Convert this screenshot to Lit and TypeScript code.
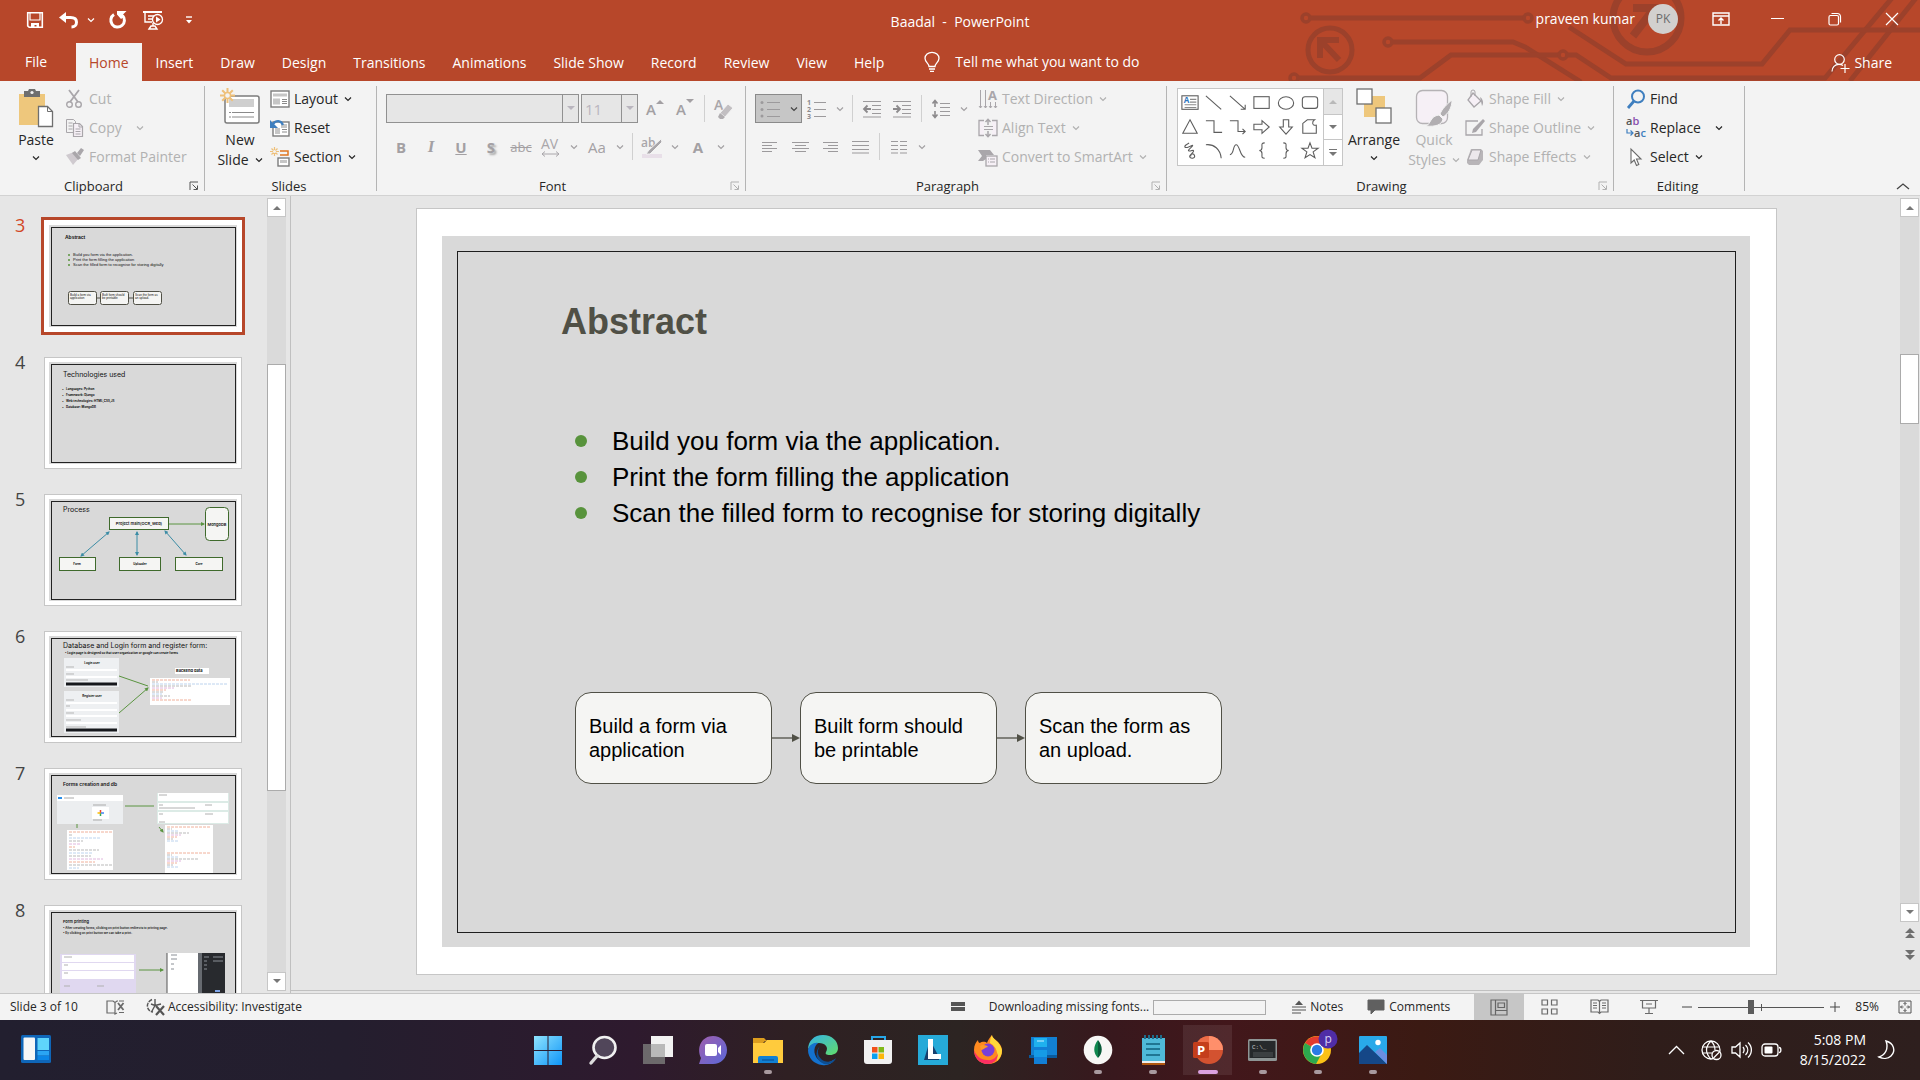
import { LitElement, html, svg, css, nothing, TemplateResult } from "lit";
import { customElement, state } from "lit/decorators.js";

/** Wraps SVG content in a box of w by h units, drawn one unit to a pixel. */
const icon = (w: number, h: number, body: unknown) =>
  html`<svg class="ico" width=${w} height=${h} viewBox="0 0 ${w} ${h}" fill="none" aria-hidden="true">${body}</svg>`;

const chevron = icon(8, 8, svg`<path d="M1 2.5l3 3 3-3" stroke="currentColor" stroke-width="1.2"/>`);
const G = "#a9a6aa";
const D = "#6a6a6a";

/* Title bar */
const iSave = icon(18, 18, svg`<path d="M1.7 1.7h14.6v14.6H3.2l-1.5-1.5z" stroke="#fff" stroke-width="1.6"/><path d="M4 1v8h10V1" stroke="#fff" stroke-width="1.2"/><path d="M5 17v-5h8v5h-2.500v-3H8.500v3z" fill="#fff"/>`);
const iUndo = icon(20, 18, svg`<path d="M4 6.500h7.500c4 0 6 2 6 4.700s-2 4.800-5 4.800" stroke="#fff" stroke-width="3"/><path d="M0 6.500L7 1v11z" fill="#fff"/>`);
const iRedo = icon(18, 18, svg`<path d="M5 3.500A6.800 6.800 0 1 0 13.500 4.500" stroke="#fff" stroke-width="3"/><path d="M8 0h9.500l-3.500 3.500v3l-2 1.500-4-4.500z" fill="#fff"/>`);
const iShow = icon(22, 20, svg`<path d="M1 2h19" stroke="#fff" stroke-width="2"/><path d="M3 3v9h7M6 6h6M6 9h4M11 13v3M7 19l2-3h4l2 3z" stroke="#fff" stroke-width="1.400"/><circle cx="15.500" cy="9.500" r="5" stroke="#fff" stroke-width="1.300" fill="#b7472a"/><path d="M14 6.500v6l4.500-3z" fill="#fff"/>`);
const iMore = icon(8, 10, svg`<path d="M1 2h6" stroke="#fff" stroke-width="1.400"/><path d="M1 5h6L4 8.500z" fill="#fff"/>`);
const iRibbonOpt = icon(18, 14, svg`<path d="M1 1h16v12H1zM1 4h16M9 12V6M6.500 8.500L9 6l2.500 2.500" stroke="#fff" stroke-width="1.400"/>`);
const iMin = icon(14, 14, svg`<path d="M0 6.500h13" stroke="#fff"/>`);
const iRestore = icon(14, 14, svg`<rect x="1" y="3.500" width="9.500" height="9.500" rx="1.500" stroke="#fff" stroke-width="1.200"/><path d="M3.500 1.500h6a3 3 0 0 1 3 3v6" stroke="#fff" stroke-width="1.200"/>`);
const iClose = icon(14, 14, svg`<path d="M1 1l12 12M13 1L1 13" stroke="#fff" stroke-width="1.200"/>`);
const iBulb = icon(16, 20, svg`<path d="M5 14.500c0-3-4-4.500-4-8.200A7 6 0 0 1 15 6.300c0 3.700-4 5.200-4 8.200zM5 17h6M6 19.300h4" stroke="#fff" stroke-width="1.300"/>`);
const iShare = icon(19, 19, svg`<circle cx="8.500" cy="5.500" r="4.800" stroke="#fff" stroke-width="1.200"/><path d="M1 17.500c0-4 2.800-7.200 7-7.200 1.600 0 3 .4 4 1.200M14 10v9M9.500 14.500h9" stroke="#fff" stroke-width="1.200"/>`);
const circuit = html`<svg class="circuit" width="640" height="81" viewBox="0 0 640 81" fill="none" stroke="#9c412b" stroke-width="5" aria-hidden="true">
  ${svg`<circle cx="26" cy="18" r="4" stroke-width="3.500"/><path d="M31 18h212"/><circle cx="248" cy="18" r="4" stroke-width="3.500"/>
  <circle cx="50" cy="50" r="22"/><path d="M40 58V40h19M42 42l17 18" stroke-width="6"/>
  <circle cx="108" cy="42" r="4" stroke-width="3.500"/><path d="M113 42h120l12 5 56 35"/>
  <circle cx="14" cy="78" r="4" stroke-width="3.500"/><path d="M19 78h121l31-23h107"/><circle cx="283" cy="55" r="4" stroke-width="3.500"/>
  <path d="M288 55h8l35 23h214L612-2M570 81L636-2"/><path d="M289 27l57 37h136l28-34h130"/>
  <circle cx="367" cy="18" r="34" stroke-width="7"/><path d="M353 8h22v20M373 10l-20 26" stroke-width="8"/>`}</svg>`;

/* Clipboard */
const iPaste = icon(36, 40, svg`<path d="M1 6h26v31H1z" fill="#eec77c"/><path d="M6 3h4l1-2h6l1 2h4v6H6z" fill="#6f6f6f"/><circle cx="14" cy="4.500" r="1.600" fill="#f3f3f3"/><path d="M20.500 18.500h9l5 5v15h-14z" fill="#fff" stroke="#6f6f6f" stroke-width="1.300"/><path d="M29.500 18.500v5h5" stroke="#6f6f6f"/>`);
const iCut = icon(20, 20, svg`<path d="M4 1l9 12M14 1L5 13" stroke=${G} stroke-width="1.800"/><circle cx="4.500" cy="15.500" r="2.800" stroke=${G} stroke-width="1.400"/><circle cx="13.500" cy="15.500" r="2.800" stroke=${G} stroke-width="1.400"/>`);
const iCopy = icon(20, 20, svg`<path d="M1.500 1.500h7l2 2v11h-9zM3.500 5h4M3.500 8h4M3.500 11h4" stroke=${G}/><path d="M8.500 5.500h6l3 3v10h-9z" fill="#f6f0f6" stroke=${G} stroke-width="1.200"/><path d="M14 5.500v3.500h3.500M10.500 11h5M10.500 13.500h5M10.500 16h5" stroke=${G}/>`);
const iPainter = icon(20, 20, svg`<path d="M1 8l8-3 5 6-6 7z" fill="#cfcacf"/><path d="M7 6l3-2 6 7-3 2zM12 6l4-5 3 2-4 6z" fill=${G}/>`);
const iLaunch = icon(10, 10, svg`<path d="M1 9V1h8M3.500 3.500L8 8M8.500 4.500v4h-4" stroke="currentColor"/>`);

/* Slides */
const star = svg`<path d="M7.500 0v15M0 7.500h15M2.200 2.200l10.600 10.600M12.800 2.200L2.200 12.800" stroke="#eec07a" stroke-width="2"/><circle cx="7.500" cy="7.500" r="3" fill="#f3f3f3" stroke="#eec07a" stroke-width="1.400"/>`;
const iNew = icon(40, 38, svg`<rect x="5" y="8" width="34" height="27" rx="2" fill="#fff" stroke="#7c7c7c" stroke-width="1.500"/><path d="M9 11h25v8H9z" fill="#cfcfcf"/><path d="M9 24.500h2M12 24.500h22M9 29h2M12 29h22" stroke="#8a8a8a"/><g>${star}</g>`);
const iLayout = icon(20, 18, svg`<rect x="1" y="1" width="18" height="16" fill="#fff" stroke="#7c7c7c" stroke-width="1.400"/><path d="M3 3.500h14v3H3zM3 8.500h7v6H3z" fill="#c6c6c6"/><path d="M12 9.500h5M12 11.500h5M12 13.500h5" stroke="#8a8a8a"/>`);
const iReset = icon(20, 20, svg`<rect x="3" y="4" width="16" height="14" fill="#fff" stroke="#7c7c7c" stroke-width="1.400"/><path d="M11 6h6v4h-6zM5 10h5v6H5z" fill="#c6c6c6"/><path d="M12 11.500h5M12 14h5" stroke="#8a8a8a"/><path d="M3 6c3-4 8-4 10 1" stroke="#3f7fbf" stroke-width="2.200"/><path d="M0 2v8h8z" fill="#3f7fbf"/>`);
const iSection = icon(20, 20, svg`<path d="M10 4h8v4h-8" stroke="#e0751f" stroke-width="1.500"/><rect x="8" y="11" width="11" height="8" fill="#fff" stroke="#7c7c7c" stroke-width="1.400"/><path d="M10 13h7v3h-7z" fill="#c6c6c6"/><path d="M4.500 0v9M0 4.500h9M1.500 1.500l6 6M7.500 1.500l-6 6" stroke="#eec07a" stroke-width="1.200"/><circle cx="4.500" cy="4.500" r="1.500" fill="#f3f3f3"/>`);

/* Paragraph */
const rows = (list: number[][]) => svg`<path d=${list.map(([x, y, w]) => `M${x} ${y}h${w}`).join("")} stroke="#9c9a9c" stroke-width="1.200"/>`;
const iBullets = icon(22, 18, svg`${rows([[7, 2.5, 13], [7, 9.5, 13], [7, 16.5, 13]])}<circle cx="2" cy="2.500" r="1.500" fill="#9c9a9c"/><circle cx="2" cy="9.500" r="1.500" fill="#9c9a9c"/><circle cx="2" cy="16" r="1.500" fill="#9c9a9c"/>`);
const iNumbers = icon(20, 20, svg`${rows([[7, 3.5, 12], [7, 10.5, 12], [7, 17.5, 12]])}<g fill="#8c8a8c" font-size="7" font-weight="700" font-family="Open Sans, sans-serif"><text x="0" y="6">1</text><text x="0" y="13">2</text><text x="0" y="20">3</text></g>`);
const iDedent = icon(18, 18, svg`${rows([[0, 1.5, 18], [9, 5.5, 9], [9, 9.5, 9], [9, 13.5, 9], [0, 17, 18]])}<path d="M8 9H1.500M4.500 5.500L1 9l3.500 3.500" stroke="#8c8a8c" stroke-width="1.800"/>`);
const iIndent = icon(18, 18, svg`${rows([[0, 1.5, 18], [9, 5.5, 9], [9, 9.5, 9], [9, 13.5, 9], [0, 17, 18]])}<path d="M0 9h6.500M3.500 5.500L7 9l-3.500 3.500" stroke="#8c8a8c" stroke-width="1.800"/>`);
const iSpacing = icon(18, 20, svg`${rows([[8, 4.5, 10], [8, 8.5, 10], [8, 12.5, 10], [8, 16.5, 10]])}<path d="M3 2v6M3 12v6M.5 4.500L3 1.500l2.500 3M.5 15.500L3 18.500l2.500-3" stroke="#8c8a8c" stroke-width="1.600"/>`);
const iLeft = icon(17, 12, rows([[0, 1.5, 15], [0, 4.5, 10], [0, 7.5, 15], [0, 10.5, 10]]));
const iCenter = icon(17, 12, rows([[0, 1.5, 17], [3, 4.5, 11], [0, 7.5, 17], [3, 10.5, 11]]));
const iRight = icon(17, 12, rows([[1, 1.5, 15], [6, 4.5, 10], [1, 7.5, 15], [6, 10.5, 10]]));
const iJustify = icon(17, 14, rows([[0, 1.5, 17], [0, 5.5, 17], [0, 9.5, 17], [0, 13, 17]]));
const iColumns = icon(17, 14, rows([[0, 1.5, 7], [0, 5.5, 7], [0, 9.5, 7], [0, 13, 7], [9, 1.5, 7], [9, 5.5, 7], [9, 9.5, 7], [9, 13, 7]]));
const iTextDir = icon(20, 20, svg`<path d="M2.500 1v18M7.500 1v18M12.500 13v6M17.500 13v6M1 17l1.500 2L4 17M6 17l1.500 2L9 17M11 17l1.500 2 1.500-2M16 17l1.500 2 1.500-2" stroke=${G}/><text x="10" y="11" font-size="13" font-weight="700" font-family="Open Sans, sans-serif" fill=${G}>A</text>`);
const iAlignText = icon(20, 20, svg`<path d="M6 2.500H1v15h5M14 2.500h5v15h-5" stroke=${G} stroke-width="1.300" fill="#f6f0f6"/><path d="M6 8.500h9M6 11.500h9" stroke=${G}/><path d="M10 1v6M10 13v6M7.500 4L10 1.300 12.500 4M7.500 16l2.500 2.700 2.500-2.700" stroke=${G} stroke-width="1.500"/>`);
const iSmart = icon(20, 20, svg`<path d="M0 3h12l4 5h-8v4l-3 2H0l4-5z" fill=${G}/><rect x="8" y="9" width="11" height="10" fill="#f6f0f6" stroke=${G} stroke-width="1.300"/><path d="M10 12h1M12 12h5M10 15h1M12 15h5" stroke=${G}/>`);

/* Drawing */
const shapeBodies: TemplateResult[] = [
  svg`<rect x="1" y="2" width="18" height="15" fill="#fff"/><path d="M10 6h7M10 9h7M4 12h13M4 15h13" stroke="#8a8a8a"/><text x="3" y="10.500" font-size="9" font-weight="700" stroke="none" fill="#2f77c0" font-family="Open Sans, sans-serif">A</text>`,
  svg`<path d="M1 2l17 15"/>`,
  svg`<path d="M1 2l17 15M18 12v5h-5"/>`,
  svg`<rect x="1" y="3" width="17" height="13"/>`,
  svg`<ellipse cx="10" cy="10" rx="8.500" ry="7"/>`,
  svg`<rect x="1.500" y="3" width="17" height="13" rx="3"/>`,
  svg`<path d="M10 2l8 15H2z"/>`,
  svg`<path d="M1 3h9v13h9"/>`,
  svg`<path d="M1 3h9v12h8M15 12l3 3-3 3"/>`,
  svg`<path d="M1 7h9V3l8 7-8 7v-4H1z"/>`,
  svg`<path d="M7 2v8H3l7 8 7-8h-4V2z"/>`,
  svg`<path d="M2 17V6l5-4h8c-3 2-3 7 2 6v9z"/>`,
  svg`<path d="M9 1c-6 3-6 6-2 5s6-3 6-2-7 6-4 6 5-2 5 0-6 5-4 7 6 1 5-2-5-2-4 1" />`,
  svg`<path d="M1 3c9-1 16 5 17 15"/>`,
  svg`<path d="M1 14C6 14 4 3 8 3s4 14 10 14"/>`,
  svg`<path d="M13 1c-4 0-3 2-3 5s-1 3.500-3 3.500c2 0 3 .5 3 3.500s-1 5 3 5"/>`,
  svg`<path d="M7 1c4 0 3 2 3 5s1 3.500 3 3.500c-2 0-3 .5-3 3.500s1 5-3 5"/>`,
  svg`<path d="M10 1l2.200 6H19l-5.500 4 2 6.500L10 14l-5.500 3.500 2-6.500L1 7h6.800z"/>`,
];
const shapeNames = ["Text Box", "Line", "Arrow", "Rectangle", "Oval", "Rounded Rectangle", "Triangle", "Elbow Connector", "Elbow Arrow", "Right Arrow", "Down Arrow", "Freeform", "Scribble", "Arc", "Curve", "Left Brace", "Right Brace", "Star"];
const iArrange = icon(36, 36, svg`<path d="M13 8h16v14H13z" fill="#eec77c"/><path d="M8 15h14v14H8z" fill="#eec77c"/><rect x="1" y="1" width="15" height="15" fill="#fff" stroke="#6f6f6f" stroke-width="1.300"/><rect x="20" y="20" width="15" height="15" fill="#fff" stroke="#6f6f6f" stroke-width="1.300"/>`);
const iQuick = icon(38, 40, svg`<rect x="1.500" y="2.500" width="31" height="33" rx="6" fill="#f6f0f6" stroke="#b5b2b5" stroke-width="1.300"/><path d="M37 12c-5 4-10 9-12 14l3 3c5-3 9-9 9-17zM24 27l4 4c-1 6-8 8-17 7 5-2 4-10 13-11z" fill="#b1aeb1" stroke="#f3f3f3"/>`);
const iFill = icon(20, 20, svg`<path d="M8 4l8 8-7 6-6-7z" stroke=${G} stroke-width="1.300" fill="#f6f0f6"/><path d="M6 8V3a2 2 0 0 1 4 0v4" stroke=${G}/><path d="M15 8c3 2 4 6 2 9z" fill=${G}/>`);
const iOutline = icon(20, 20, svg`<path d="M17 11v6H1V3h12" stroke=${G} stroke-width="1.300"/><path d="M18 1l2 2-9 11-4 1 1-4z" fill=${G}/>`);
const iEffects = icon(20, 20, svg`<path d="M6 2h10l2 2v9l-4 5H4l-2-2v-3z" fill="#b8b5b8"/><path d="M7 3h9l-3 10H3z" fill="#ece8ec" stroke=${G}/>`);

/* Editing */
const iFind = icon(20, 20, svg`<circle cx="12" cy="7.500" r="6" stroke="#3f7fbf" stroke-width="2"/><path d="M8 12l-6 7" stroke="#3f7fbf" stroke-width="2.800"/>`);
const iReplace = icon(20, 20, svg`<g font-size="11" font-weight="600" font-family="Open Sans, sans-serif"><text x="0" y="7"><tspan fill="#555">a</tspan><tspan fill="#8a4fae">b</tspan></text><text x="8" y="19"><tspan fill="#555">a</tspan><tspan fill="#3f7fbf">c</tspan></text></g><path d="M1 11v4h6M4.500 12.500L7 15l-2.500 2.500" stroke="#3f7fbf" stroke-width="1.200"/>`);
const iSelect = icon(20, 20, svg`<path d="M5 2v14l3.200-3 2.300 5.500 2.300-1-2.300-5.500h4.500z" stroke="#6a6a6a" fill="#fff" stroke-width="1.100"/>`);
const iEraser = icon(20, 22, svg`<text x="0" y="12" font-size="14" font-weight="600" font-family="Open Sans, sans-serif" fill="#a9a6aa">A</text><path d="M14 6l5 4-8 9-5-4z" fill="#c2bfc2" stroke="#f3f3f3"/><path d="M6 15l5 4-2 2H6l-2-2z" fill="#b0adb0"/>`);
const iHighlight = icon(22, 22, svg`<path d="M1 18h20v4H1z" fill="#e8dfe8"/><text x="0" y="11" font-size="12" font-weight="600" font-family="Open Sans, sans-serif" fill="#a9a6aa">ab</text><path d="M20 3l1 3-9 9-3 3H5l3-4z" fill="#a9a6aa" stroke="#f3f3f3"/>`);
const iSpread = icon(20, 20, svg`<text x="0" y="12" font-size="14" font-family="Open Sans, sans-serif" fill="#a9a6aa">AV</text><path d="M1 17h17M4 14.500L1 17l3 2.500M15 14.500l3 2.500-3 2.500" stroke=${G}/>`);
const tri = (up: boolean) => icon(8, 5, up ? svg`<path d="M0 5l4-4 4 4z" fill="currentColor"/>` : svg`<path d="M0 0l4 4 4-4z" fill="currentColor"/>`);
const iCollapse = icon(14, 8, svg`<path d="M1 7l6-5 6 5" stroke="#444" stroke-width="1.300"/>`);

/* Status bar */
const iSpell = icon(20, 16, svg`<path d="M9 14H1V2h6l2 1.500L11 2h1M9 3.500V15l2-1" stroke=${D} stroke-width="1.200"/><path d="M12 4l5.500 7M17.500 4L12 11" stroke=${D} stroke-width="1.800"/><path d="M13 2h5M13 13.500h5" stroke=${D}/>`);
const iAccess = icon(20, 18, svg`<path d="M6 1.500C2.500 3 1 6 1.500 9S4 13.500 7 14" stroke="#555" stroke-width="1.400" stroke-dasharray="4 1"/><path d="M9 1v6M5 6l4 1.500L15 6M9 7.500L6 13" stroke="#555" stroke-width="1.400"/><path d="M10 8l8 9M18 8l-8 9" stroke="#555" stroke-width="2.200"/>`);
const iBars = icon(14, 10, svg`<path d="M0 0h14v4H0zM0 5h14v4H0z" fill="#555"/>`);
const iNotes = icon(14, 16, svg`<path d="M3 6l4-4.500L11 6z" fill="#555"/><path d="M0 8h14M0 11h14M0 14h9" stroke="#555" stroke-width="1.200"/>`);
const iComment = icon(18, 16, svg`<path d="M1 1h16v10H8l-4 4v-4H1z" fill="#606060" stroke="#606060" stroke-linejoin="round"/>`);
const iNormal = icon(18, 17, svg`<path d="M1 1h16v15H1zM5.500 1v15M5.500 11.500H17M8 4h6.500v4.500H8z" stroke="#666" stroke-width="1.200"/>`);
const iSorter = icon(17, 16, svg`<path d="M1 1h5.500v5H1zM10.500 1H16v5h-5.500zM1 10h5.500v5H1zM10.500 10H16v5h-5.500z" stroke=${D} stroke-width="1.200"/>`);
const iReading = icon(19, 16, svg`<path d="M9.500 2.500L8 1H1v12h7l1.500 1.500L11 13h7V1h-7zv12M3 4h4M3 6.500h4M3 9h4M12 4h4M12 6.500h4M12 9h4" stroke=${D} stroke-width="1.200"/>`);
const iSlideShow = icon(18, 16, svg`<path d="M0 1.500h18M2.500 2v7h13V2M9 9v5M5 14.500h8M6 5h6" stroke=${D} stroke-width="1.200"/>`);
const iFit = icon(14, 14, svg`<path d="M1 1h12v12H1z" stroke="#555"/><path d="M7 2.500v3M7 8.500v3M2.500 7h3M8.500 7h3M5.500 4L7 2.500 8.500 4M5.500 10L7 11.500 8.500 10M4 5.500L2.500 7 4 8.500M10 5.500L11.500 7 10 8.500" stroke="#555"/>`);

/* Taskbar */
const gradient = (id: string, a: string, b: string) => svg`<linearGradient id=${id} x1="0" y1="0" x2="1" y2="1"><stop offset="0" stop-color=${a}/><stop offset="1" stop-color=${b}/></linearGradient>`;
const iWidgets = icon(30, 28, svg`<rect width="30" height="28" rx="1.500" fill="#0f66b8"/><rect x="2.500" y="2.500" width="11.500" height="22.500" rx="1" fill="#f6f6f6"/><path d="M16.500 3H28v12H16.500z" fill="#5fd4fb"/><path d="M16.500 16H28v4.500H16.500z" fill="#2aa5f3"/><path d="M16.500 21H28v4H16.500z" fill="#0b86e6"/>`);
interface App { name: string; art: TemplateResult; open?: boolean; active?: boolean }
const apps: App[] = [
  { name: "Start", art: svg`${gradient("st", "#8fe4ff", "#0f95f7")}<path d="M1 1h13.500v14H1zM15.500 1H29v14H15.500zM1 16h13.500v14H1zM15.500 16H29v14H15.500z" fill="url(#st)"/>` },
  { name: "Search", art: svg`<ellipse cx="16.500" cy="12.500" rx="11" ry="10.500" fill="#51465a" stroke="#f1f1f1" stroke-width="2.600"/><path d="M9 21l-6 7" stroke="#dcdcdc" stroke-width="3.400" stroke-linecap="round"/>` },
  { name: "Task View", art: svg`<path d="M8 1h22v21H8z" fill="#f2f2f2"/><path d="M0 9h22v20H0z" fill="#777" opacity=".85"/><path d="M8 9h14v13H8z" fill="#b9b9b9"/>` },
  { name: "Chat", art: svg`${gradient("ch", "#a05fae", "#5a68d8")}<path d="M15 1c8 0 14 6 14 14s-6 14-14 14H1l2-6C-2 12 4 1 15 1z" fill="url(#ch)"/><rect x="7" y="9" width="12" height="12" rx="2" fill="#fff"/><path d="M20 13l3-3v10l-3-3z" fill="#fff"/>` },
  { name: "File Explorer", open: true, art: svg`<path d="M0 3h11l3 3h-2L9 9H0z" fill="#dc9d1e"/><path d="M0 8h11l3-3h16v23H0z" fill="#ffcb3d"/><path d="M5 28v-5a2 2 0 0 1 2-2h16a2 2 0 0 1 2 2v5z" fill="#1180d3"/><path d="M9 25h12" stroke="#0b5ba5" stroke-width="1.500"/>` },
  { name: "Edge", art: svg`${gradient("ed", "#35b3e8", "#62dc6a")}<path d="M0 15C0 6 6 0 15 0s15 6 15 13c0 5-4 7-8 7s-5-1-4-3c3-5-1-9-7-9C5 8 1 11 0 15z" fill="url(#ed)"/><path d="M0 15c1-5 6-8 10-7-6 5-4 14 2 18 5 3 11 1 15-2-3 5-8 7-13 6C6 29 0 23 0 15z" fill="#1472cf"/><path d="M12 11c-4 5-2 12 4 15 5 2 9 0 12-3-2 5-7 7-12 6C8 26 6 17 12 11z" fill="#0d4e92"/>` },
  { name: "Microsoft Store", art: svg`<path d="M9 6V2h13v4" stroke="#27a7e8" stroke-width="2"/><path d="M1 5h28v21a3 3 0 0 1-3 3H4a3 3 0 0 1-3-3z" fill="#f1f1f1"/><path d="M9 12h5.500v5.500H9z" fill="#f1511b"/><path d="M15.500 12H21v5.500h-5.500z" fill="#80b918"/><path d="M9 18.500h5.500V24H9z" fill="#0aa0ef"/><path d="M15.500 18.500H21V24h-5.500z" fill="#fbb60a"/>` },
  { name: "Lightshot", art: svg`<path d="M0 0h30v30H0z" fill="#26aad8"/><path d="M12 5L6 25h15v-3z" fill="#173f6e"/><path d="M10 4h5v15h8v5H10z" fill="#fff"/>` },
  { name: "Firefox", art: svg`<path d="M15 29C6 29 1 22 1 15c0-5 2-8 4-10 0 2 1 3 2 3 3-2 6-1 7 0 1-3 3-6 5-8 0 3 3 4 6 7 3 3 4 6 4 9 0 7-5 13-14 13z" fill="#ff8a1f"/><path d="M19 0c0 4 8 6 10 15 0 5-2 8-5 11 1-8 0-14-7-18 0-4 1-6 2-8z" fill="#ffd83a"/><path d="M15 29C6 29 1 22 1 15c2 6 7 10 13 10 6 1 10-3 11-7 0 7-5 11-10 11z" fill="#fb2e63"/><circle cx="15" cy="15" r="6.500" fill="#7a3fd8"/><path d="M7 11c3-2 7-1 8 1-3 0-4 3-7 3z" fill="#ff9a27"/>` },
  { name: "Your Phone", art: svg`<path d="M3 2h26v20H3z" fill="#1280d2"/><path d="M1 20h28v3H1z" fill="#0a5a9c"/><path d="M6 3h13v19H6z" fill="#1fb1ee"/><path d="M6 12h13v17H6z" fill="#127fd6"/><path d="M6 15h13v7H6z" fill="#159be6"/><path d="M9 6h7" stroke="#cdefff"/>` },
  { name: "MongoDB Compass", open: true, art: svg`<circle cx="15" cy="15" r="14.300" fill="#f7f7f5"/><path d="M15 5c-5 6-5 13 0 18z" fill="#10884f"/><path d="M15 5c5 6 5 13 0 18v2z" fill="#0a5c3a"/>` },
  { name: "Notepad", open: true, art: svg`<path d="M4 3h23v24H4z" fill="#4fb9d8"/><path d="M4 26h23v2H4z" fill="#eee"/><path d="M4 28h23v2H4z" fill="#b0570f"/><path d="M7 0v4M11 0v4M15 0v4M19 0v4M23 0v4" stroke="#1d6d8c" stroke-width="2"/><path d="M8 9h14M8 14h14M8 20h14" stroke="#12607c" stroke-width="1.700"/>` },
  { name: "PowerPoint", open: true, active: true, art: svg`<circle cx="16" cy="15" r="14" fill="#d35230"/><path d="M16 1a14 14 0 0 1 14 14H16z" fill="#ff8f6b"/><path d="M16 1v14H2A14 14 0 0 1 16 1z" fill="#ed6c47"/><rect y="7" width="16" height="16" rx="1.500" fill="#c43e1c"/><text x="4" y="20" font-size="13" font-weight="700" font-family="Open Sans, sans-serif" fill="#fff">P</text>` },
  { name: "Command Prompt", open: true, art: svg`<rect y="4" width="29" height="22" rx="1.500" fill="#8e9595"/><rect x="1.500" y="6" width="26" height="17" fill="#26292b"/><text x="4" y="14" font-size="6" font-family="Liberation Mono, monospace" fill="#c7c7c7">C:\\_</text><path d="M5 17h20v5H5z" fill="#3b3f41"/>` },
  { name: "Chrome", open: true, art: svg`<circle cx="14" cy="15" r="14" fill="#fbc116"/><path d="M14 15L2 8A14 14 0 0 1 26 8z" fill="#e33b2e"/><path d="M14 15L2 8a14 14 0 0 0 11 21l6-11z" fill="#2da94f"/><circle cx="14" cy="15" r="6.800" fill="#fff"/><circle cx="14" cy="15" r="5.200" fill="#2a7be4"/><circle cx="25" cy="4" r="9.500" fill="#4f2da6"/><text x="21.500" y="8" font-size="12" font-family="Open Sans, sans-serif" fill="#d9cdf5">p</text>` },
  { name: "Photos", open: true, art: svg`<rect x="1" y="1" width="28" height="28" rx="1" fill="#29a9e9"/><path d="M1 18l8-8 20 19H1z" fill="#154787"/><path d="M17 17l5-4 7 7v9z" fill="#6b8de0"/><circle cx="20" cy="7.500" r="2.700" fill="#fff"/>` },
];
const iUp = icon(18, 10, svg`<path d="M1 9l7.500-7.500L16 9" stroke="#fff" stroke-width="1.300"/>`);
const iGlobe = icon(21, 21, svg`<circle cx="10" cy="10" r="9" stroke="#fff" stroke-width="1.300"/><path d="M10 1c-6 6-6 12 0 18M10 1c3 3 4 6 4 9M1 7h18M2 13h9" stroke="#fff" stroke-width="1.200"/><circle cx="15.500" cy="15" r="4.500" fill="#331c18" stroke="#fff" stroke-width="1.300"/><path d="M12.500 18l6-6" stroke="#fff" stroke-width="1.300"/>`);
const iSound = icon(21, 18, svg`<path d="M1 6h3.500L9 2v14l-4.500-4H1zM12 6c1.500 2 1.500 4 0 6M14.500 4c3 3 3 7 0 10M17 1.500c4.500 4 4.500 11 0 15" stroke="#fff" stroke-width="1.300"/>`);
const iBattery = icon(21, 14, svg`<rect x="1" y="1" width="16" height="12" rx="3" stroke="#fff" stroke-width="1.300"/><rect x="3.500" y="3.500" width="8" height="7" rx="1" fill="#fff"/><path d="M18 4.500c2.500 0 2.500 5 0 5" stroke="#fff" stroke-width="1.300"/>`);
const iMoon = icon(17, 20, svg`<path d="M8 1c8 2 10 10 5 15-3 3-8 3-12 1C7 15 11 9 8 1z" stroke="#fff" stroke-width="1.400"/>`);

/* Slide thumbnails, drawn on a 188 by 102 canvas */
const label = (x: number, y: number, size: number, text: string, weight = 400, anchor = "start") =>
  svg`<text x=${x} y=${y} font-size=${size} font-weight=${weight} text-anchor=${anchor} fill="#111">${text}</text>`;
const lines = (x: number, y: number, widths: number[], colors: string[], step = 3) =>
  widths.map((w, i) => svg`<path d="M${x} ${y + i * step}h${w}" stroke=${colors[i % colors.length]} stroke-width="1" stroke-dasharray="3 1"/>`);
const arrowHeads = svg`<defs>
  <marker id="green" viewBox="0 0 4 4" refX="3" refY="2" markerWidth="4" markerHeight="4" orient="auto"><path d="M0 0l4 2-4 2z" fill="#5a9440"/></marker>
  <marker id="teal" viewBox="0 0 4 4" refX="3" refY="2" markerWidth="4" markerHeight="4" orient="auto-start-reverse"><path d="M0 0l4 2-4 2z" fill="#3b8ca5"/></marker></defs>`;
const code = ["#f0b09a", "#b9b9b9", "#bcd3ee", "#b9b9b9", "#e0b6dd"];
const thumbs: { n: number; title: string; art: TemplateResult }[] = [
  {
    n: 3, title: "Abstract", art: svg`<g font-family="Liberation Sans, Arial, sans-serif">${label(16, 14, 5, "Abstract", 700)}
    ${["Build you form via the application.", "Print the form filling the application", "Scan the filled form to recognise for storing digitally"].map((t, i) => svg`<circle cx="20" cy=${30 + i * 5} r="1" fill="#58933c"/>${label(24, 31 + i * 5, 4, t)}`)}
    ${[19, 51, 84].map((x, i) => svg`<rect x=${x + 0.5} y="66.500" width="28" height="13" rx="2" fill="#f5f5f3" stroke="#505046"/>${label(x + 2, 71, 3, ["Build a form via", "Built form should", "Scan the form as"][i])}${label(x + 2, 74, 3, ["application", "be printable", "an upload."][i])}`)}</g>
    <path d="M48 73h3M80 73h4" stroke="#505046"/>`,
  },
  {
    n: 4, title: "Technologies used", art: svg`${label(14, 15, 7, "Technologies used")}
    ${["Languages: Python", "Framework: Django", "Web technologies: HTML,CSS,JS", "Database: MongoDB"].map((t, i) => svg`${label(13, 28 + i * 6, 3, "•")}${label(17, 28 + i * 6, 3, t, 700)}`)}`,
  },
  {
    n: 5, title: "Process", art: svg`${label(14, 13, 7, "Process")}
    <g fill="#f5f5f3" stroke="#3f6a2c"><rect x="60.500" y="18.500" width="59" height="12"/><rect x="156.500" y="8.500" width="23" height="33" rx="4"/><rect x="10.500" y="58.500" width="36" height="13"/><rect x="70.500" y="58.500" width="41" height="13"/><rect x="126.500" y="58.500" width="47" height="13"/></g>
    ${label(90, 26, 4, "Project main(OCR_Web)", 600, "middle")}${label(168, 27, 4, "MongoDB", 600, "middle")}${label(28, 66, 3, "Form", 700, "middle")}${label(91, 66, 3, "Uploader", 700, "middle")}${label(150, 66, 3, "Core", 700, "middle")}
    <path d="M120 25h35" stroke="#5a9440" marker-end="url(#green)"/><g stroke="#3b8ca5"><path d="M60 33L32 57" marker-start="url(#teal)" marker-end="url(#teal)"/><path d="M88 33v23" marker-start="url(#teal)" marker-end="url(#teal)"/><path d="M116 32l21 24" marker-start="url(#teal)" marker-end="url(#teal)"/></g>`,
  },
  {
    n: 6, title: "Database and Login form and register form:", art: svg`${label(14, 12, 7, "Database and Login form and register form:")}
    ${label(16, 18, 3, "• Login page is designed so that user organization or google can create forms", 700)}
    <path d="M15 22h55v29H15zM15 55h55v42H15z" fill="#eef0f2"/>${label(43, 28, 3, "Login user", 700, "middle")}${label(43, 61, 3, "Register user", 700, "middle")}
    <path d="M17 34h51M17 41h51M17 67h51M17 74h51M17 80h51M17 87h51" stroke="#fff" stroke-width="2"/><path d="M17 31h8M17 38h8M17 44h22M17 64h8M17 70h4M17 77h8M17 84h15M17 91h20" stroke="#b5b5b5"/><path d="M17 48h51M17 94h51" stroke="#16181c" stroke-width="3"/>
    <path d="M126 32h34v6h-34zM101 42h80v27h-80z" fill="#fff"/>${label(127, 36, 4, "Backend data", 700)}${lines(103, 44, [38, 6, 76, 40, 22, 14, 12, 10, 18, 10, 40], code, 2)}
    <path d="M70 40l29 10M70 77l29-25" stroke="#5a9440" marker-end="url(#green)"/>`,
  },
  {
    n: 7, title: "Forms creation and db", art: svg`${label(14, 13, 5, "Forms creation and db", 600)}
    <path d="M8 22h66v29H8z" fill="#eceef0"/><path d="M8 22h66v6H8zM43 34h17v12H43z" fill="#fff"/><path d="M9 24h4v2H9z" fill="#2b8fe8"/><path d="M15 25h10M44 32h13M44 47h9" stroke="#aaa"/><path d="M51.500 37v3" stroke="#ea4335" stroke-width="1.500"/><path d="M51.500 40v3" stroke="#34a853" stroke-width="1.500"/><path d="M48.500 40h3" stroke="#fbbc05" stroke-width="1.500"/><path d="M52 40h3" stroke="#4285f4" stroke-width="1.500"/>
    <path d="M108 20h72v31h-72z" fill="#dcebe6"/><path d="M109 20h70v8h-70zM109 30h70v7h-70zM109 39h70v11h-70z" fill="#fff"/><path d="M110 22h8M110 32h4M156 32h7M110 35h36M110 41h4M156 41h8M110 49h6" stroke="#b0b0b0"/>
    <path d="M18 57h46v40H18zM116 52h48v48h-48z" fill="#fff"/>${lines(20, 59, [43, 4, 32, 14, 12, 6, 30, 24, 22, 34, 26, 43, 10], code)}${lines(118, 54, [44, 5, 12, 22, 14, 10, 6, 12], code, 2)}${lines(118, 80, [44, 5, 12, 32, 14, 10, 6, 12], code, 2)}
    <path d="M76 33h29M28 51v4M110 54l4 5" stroke="#5a9440" marker-end="url(#green)"/>`,
  },
  {
    n: 8, title: "Form printing", art: svg`${label(14, 13, 4, "Form printing", 600)}${label(14, 19, 3, "• After creating forms, clicking on print button redirects to printing page.", 600)}${label(14, 24, 3, "• By clicking on print button we can take a print.", 600)}
    <path d="M11 44h76v58H11z" fill="#e0d8f0"/><path d="M13 45h72v7H13zM13 53h72v7H13zM13 61h72v8H13z" fill="#fff"/><path d="M15 47h8M15 55h4M15 63h4M15 76h6M48 76h7" stroke="#b0b0b0"/>
    <path d="M118 43h31v59h-31z" fill="#fff"/><path d="M149 43h4v59h-4z" fill="#666a70"/><path d="M153 43h23v59h-23z" fill="#282a2e"/><path d="M118 43v59" stroke="#555"/><path d="M122 45h6M122 49h6M122 54h3M122 59h3M155 47h5M164 47h10M155 51h3M164 51h10M155 55h3M155 59h3" stroke="#8a8f96"/><path d="M166 80h5v2h-5z" fill="#7fa5e8"/>
    <path d="M90 60h24" stroke="#5a9440" marker-end="url(#green)"/>`,
  },
];

const tabs = ["File", "Home", "Insert", "Draw", "Design", "Transitions", "Animations", "Slide Show", "Record", "Review", "View", "Help"];

@customElement("app-root")
export class AppRoot extends LitElement {
  @state() private tab = "Home";
  @state() private slide = 3;

  static styles = css`
    :host { display: block; color: #262626; font: 14px/20px "Open Sans", "Segoe UI", sans-serif; }
    * { box-sizing: border-box; }
    button, select, input { font: inherit; color: inherit; margin: 0; }
    button { border: 0; padding: 0; background: none; display: flex; align-items: center; justify-content: center; white-space: nowrap; }
    .ico { display: block; flex: none; overflow: visible; }
    .app { height: 100vh; display: flex; flex-direction: column; background: #e6e6e6; overflow: hidden; }

    .head { position: relative; background: #b7472a; color: #fff; flex: none; }
    .circuit { position: absolute; right: 0; top: 0; overflow: hidden; }
    .titlebar { position: relative; display: grid; grid-template-columns: 1fr auto 1fr; height: 43px; }
    .quick { display: flex; align-items: center; height: 40px; padding-left: 26px; }
    .quick .gap { margin-right: 15px; }
    .quick .narrow { margin: 0 14px 0 8px; }
    .quick .wide { margin-left: 6px; }
    .doc { line-height: 44px; white-space: pre; }
    .window { display: flex; align-items: center; justify-content: flex-end; height: 38px; }
    .user { margin-right: 13px; }
    .avatar { width: 30px; height: 30px; border-radius: 50%; background: #d2d0ce; color: #6b6b6b; font-size: 12px; line-height: 30px; text-align: center; margin-right: 14px; }
    .window button { width: 57px; height: 38px; }
    .tabrow { position: relative; display: flex; gap: 1px; height: 38px; padding-right: 28px; }
    .tab { padding: 1px 13px 0; }
    .tab.file { width: 75px; padding: 0 0 0 25px; justify-content: flex-start; }
    .tab.on { background: #f3f3f3; color: #b7472a; }
    .tell { margin-left: 26px; gap: 15px; }
    .share { margin-left: auto; gap: 4px; padding-top: 2px; }

    .ribbon { flex: none; display: flex; background: #f3f3f3; height: 115px; border-bottom: 1px solid #d2d2d2; }
    .group { flex: none; display: flex; flex-direction: column; padding-top: 3px; }
    .body { display: flex; height: 87px; }
    .foot { display: flex; align-items: center; height: 24px; padding: 5px 3px 0 0; font-size: 13px; }
    .foot span { flex: 1; text-align: center; }
    .foot button { width: 14px; height: 14px; color: #555; }
    .rule { width: 1px; margin: 5px 0 4px; background: #b4b4b4; flex: none; }
    .clipboard { width: 204px; }
    .clipboard .body { padding-left: 7px; }
    .slides { width: 171px; }
    .slides .body { padding-left: 6px; gap: 1px; }
    .font { width: 368px; }
    .paragraph { width: 420px; }
    .paragraph .body { gap: 6px; }
    .drawing { width: 446px; }
    .drawing .body { padding-left: 10px; gap: 2px; }
    .editing { width: 130px; }
    .editing .body { padding-left: 12px; }
    .big { flex-direction: column; justify-content: flex-start; padding-top: 4px; width: 58px; }
    .big .art { height: 42px; }
    .big .line { display: flex; align-items: center; gap: 6px; height: 20px; }
    .big .line.tip { height: 16px; }
    .stack { display: flex; flex-direction: column; align-items: flex-start; }
    .item { height: 29px; gap: 4px; }
    .item .ico:last-child { margin-left: 2px; }
    .item.far .ico:last-child { margin-left: 10px; }
    .off, .foot .off { color: #b1b1b1; }
    .tools { display: flex; flex-direction: column; gap: 9px; padding: 10px 0 0 9px; }
    .line-of { display: flex; align-items: center; height: 29px; color: #a3a0a3; }
    .cell { width: 30px; height: 29px; font-size: 15px; }
    .cell.tight { width: 16px; }
    .bar { width: 1px; height: 27px; background: #d0d0d0; margin: 0 4px; }
    .bold { font-weight: 700; }
    .italic { font: italic 700 17px/20px "Liberation Serif", serif; }
    .under { font-weight: 700; text-decoration: underline; }
    .shadow { font-weight: 700; text-shadow: 2px 2px 2px #aaa; }
    .strike { font-size: 13px; text-decoration: line-through; }
    .grow { font-weight: 600; gap: 0; }
    .grow .ico { align-self: flex-start; margin-top: 5px; }
    .combo { display: flex; align-items: center; height: 29px; border: 1px solid #919191; background: #e6e6e6; margin-right: 2px; }
    .combo select { appearance: none; border: 0; background: none; flex: 1; min-width: 0; padding: 0 3px; opacity: 1; font-size: 15px; color: #b9b5be; }
    .combo .drop { display: flex; align-items: center; justify-content: center; width: 16px; height: 27px; border-left: 1px solid #919191; color: #b9b5be; }
    .combo.face { width: 193px; }
    .combo.size { width: 57px; }
    .bulleted { width: 47px; height: 29px; border: 1px solid #8a8a8a; background: #c6c6c6; color: #444; gap: 8px; }
    .gallery { display: flex; width: 166px; height: 78px; margin-top: 4px; border: 1px solid #c6c6c6; background: #fff; }
    .shapes { display: grid; grid-template-columns: repeat(6, 24px); grid-auto-rows: 24px; padding-top: 2px; flex: 1; }
    .scroller { display: flex; flex-direction: column; width: 19px; border-left: 1px solid #c6c6c6; }
    .scroller button { flex: 1; color: #777; }
    .scroller button + button { border-top: 1px solid #c6c6c6; }
    .scroller .off { background: #e6e6e6; color: #b9b9b9; }
    .collapse { margin: auto 10px 2px auto; width: 14px; height: 14px; }

    .work { flex: 1; min-height: 0; display: flex; }
    .side { flex: none; width: 291px; padding: 2px 4px 2px 0; border-right: 1px solid #c0c0c0; display: flex; }
    .list { flex: 1; margin: -2px 0; padding: 24px 0 0 15px; list-style: none; overflow: hidden; }
    .list li { display: flex; height: 112px; margin-bottom: 25px; color: #444; font-size: 18px; line-height: 10px; }
    .list .num { width: 29px; }
    .list .on .num { color: #d24726; }
    .thumb { width: 198px; height: 112px; background: #fff; border: 1px solid #c6c6c6; }
    .on .thumb { border-color: #fff; outline: 3px solid #b7472a; }
    .scroll { flex: none; width: 19px; display: flex; flex-direction: column; background: #dadada; }
    .scroll button { height: 19px; border: 1px solid #c6c6c6; background: #fff; color: #777; }
    .scroll .grip { background: #fff; border: 1px solid #ababab; }
    .a147 { flex: 147; } .a427 { flex: 427; } .a181 { flex: 181; }
    .a137 { flex: 137; } .a69 { flex: 69; } .a480 { flex: 480; }
    .editor { flex: 1; min-width: 0; display: flex; padding-top: 2px; margin-bottom: 2px; border-bottom: 1px solid #c0c0c0; }
    .canvas { flex: 1; min-width: 0; display: flex; padding: 10px 123px 15px 125px; }
    .rail { display: flex; flex-direction: column; width: 20px; }
    .rail .scroll { flex: 1; }
    .jump { height: 22px; width: 19px; color: #6f6f6f; }
    .jump.last { margin-bottom: 24px; }
    .page { flex: 1; display: flex; background: #fff; border: 1px solid #c6c6c6; padding: 27px 26px 27px 25px; }
    .tint { flex: 1; display: flex; background: #d9d9d9; padding: 15px 14px 14px 15px; }
    .frame { flex: 1; border: 1px solid #1e1e1e; padding: 48px 103px; font-family: "Liberation Sans", Arial, sans-serif; color: #000; }
    h1 { margin: 0; font-size: 36px; line-height: 44px; color: #505046; }
    .points { margin: 79px 0 0; padding: 0 0 0 14px; list-style: none; font-size: 26px; line-height: 36px; }
    .points li { display: flex; align-items: center; gap: 25px; }
    .points li::before { content: ""; width: 12px; height: 12px; border-radius: 50%; background: #58933c; }
    .flow { display: flex; align-items: center; margin-top: 161px; padding-left: 14px; font-size: 20px; line-height: 24px; }
    .step { width: 197px; height: 92px; display: flex; align-items: center; padding: 0 20px 0 13px; border: 1px solid #505046; border-radius: 16px; background: #f5f5f3; }

    .status { flex: none; height: 27px; display: flex; align-items: center; background: #f3f3f3; border-top: 1px solid #c6c6c6; font-size: 12px; padding-left: 10px; }
    .status button { height: 26px; gap: 4px; }
    .status .spell { margin-left: 28px; }
    .status .access { margin-left: 20px; gap: 2px; }
    .status .right { margin-left: auto; display: flex; align-items: center; }
    .status .load { margin: 0 4px 0 24px; }
    .status progress { appearance: none; width: 113px; height: 15px; border: 1px solid #ababab; background: #f3f3f3; }
    .status progress::-webkit-progress-bar { background: #f3f3f3; }
    .status .notes { margin: 0 24px 0 26px; }
    .status .view { width: 50px; }
    .status .view.on { background: #c6c6c6; }
    .status .view.first { margin-left: 24px; }
    .status .view.last { margin-right: 7px; }
    .zoom { position: relative; display: flex; align-items: center; margin: 0 5px; }
    .zoom input { appearance: none; width: 126px; height: 16px; background: linear-gradient(#555, #555) center / 100% 1px no-repeat; }
    .zoom input::-webkit-slider-thumb { appearance: none; width: 6px; height: 14px; background: #5c5c5c; }
    .zoom .mid { position: absolute; left: 50%; top: 5px; width: 1px; height: 7px; background: #555; }
    .status .pm { width: 12px; }
    .pct { margin: 0 19px 0 14px; }
    .status .fit { margin-right: 8px; }

    .task { flex: none; height: 60px; display: grid; grid-template-columns: 1fr auto 1fr; align-items: center; color: #fff; background: linear-gradient(90deg, #221f2f, #241e2e 18%, #2e1a2e 33%, #2f2023 41%, #2c2422 50%, #38181d 58%, #42171b 64%, #3b1a13 74%, #2f1d1a 86%, #2e1f1e); }
    .widgets { margin-left: 21px; justify-self: start; padding-bottom: 2px; }
    .apps { display: flex; }
    .apps button { width: 55px; height: 60px; flex-direction: column; justify-content: flex-start; padding-top: 15px; }
    .apps .pip { width: 8px; height: 4px; border-radius: 2px; background: #a89a9f; margin-top: 5px; }
    .apps .live { background: linear-gradient(#ffffff14, #ffffff14) center / 49px 50px no-repeat; }
    .apps .live .pip { width: 20px; background: #dba1e0; }
    .tray { display: flex; align-items: center; justify-content: flex-end; padding-right: 25px; }
    .tray button { margin-right: 9px; }
    .tray .up { margin-right: 15px; }
    .clock { text-align: right; margin: 0 12px 0 9px; }
    .tray .moon { margin: 0; }
  `;

  private group(cls: string, name: string, body: unknown, launcher: "" | "on" | "off" = "") {
    return html`<section class="group ${cls}" aria-label=${name}>
        <div class="body">${body}</div>
        <div class="foot"><span>${name}</span>${launcher ? html`<button class=${launcher} aria-label="${name} settings">${iLaunch}</button>` : nothing}</div>
      </section><div class="rule"></div>`;
  }

  private item(art: unknown, text: string, opts: { off?: boolean; menu?: boolean; far?: boolean } = {}) {
    return html`<button class="item ${opts.off ? "off" : ""} ${opts.far ? "far" : ""}" ?disabled=${!!opts.off}>${art}<span>${text}</span>${opts.menu ? chevron : nothing}</button>`;
  }

  private cell(content: unknown, name: string, cls = "") {
    return html`<button class="cell ${cls}" aria-label=${name} disabled>${content}</button>`;
  }

  private drop(name: string) {
    return this.cell(chevron, `${name} options`, "tight");
  }

  private ribbon() {
    return html`<div class="ribbon">
      ${this.group("clipboard", "Clipboard", html`
        <button class="big"><span class="art">${iPaste}</span><span class="line">Paste</span><span class="line tip">${chevron}</span></button>
        <div class="stack">${this.item(iCut, "Cut", { off: true })}${this.item(iCopy, "Copy", { off: true, menu: true, far: true })}${this.item(iPainter, "Format Painter", { off: true })}</div>`, "on")}
      ${this.group("slides", "Slides", html`
        <button class="big"><span class="art">${iNew}</span><span class="line">New</span><span class="line">Slide ${chevron}</span></button>
        <div class="stack">${this.item(iLayout, "Layout", { menu: true })}${this.item(iReset, "Reset")}${this.item(iSection, "Section", { menu: true })}</div>`)}
      ${this.group("font", "Font", html`<div class="tools">
        <div class="line-of">
          <label class="combo face"><select aria-label="Font" disabled><option></option></select><span class="drop">${tri(false)}</span></label>
          <label class="combo size"><select aria-label="Font size" disabled><option>11</option></select><span class="drop">${tri(false)}</span></label>
          ${this.cell(html`A${tri(true)}`, "Increase font size", "grow")}${this.cell(html`A${tri(false)}`, "Decrease font size", "grow")}<i class="bar"></i>${this.cell(iEraser, "Clear formatting")}
        </div>
        <div class="line-of">
          ${this.cell("B", "Bold", "bold")}${this.cell("I", "Italic", "italic")}${this.cell("U", "Underline", "under")}${this.cell("S", "Text shadow", "shadow")}${this.cell("abc", "Strikethrough", "strike")}
          ${this.cell(iSpread, "Character spacing")}${this.drop("Character spacing")}${this.cell("Aa", "Change case")}${this.drop("Change case")}<i class="bar"></i>
          ${this.cell(iHighlight, "Text highlight colour")}${this.drop("Highlight")}${this.cell("A", "Font colour", "bold")}${this.drop("Font colour")}
        </div></div>`, "off")}
      ${this.group("paragraph", "Paragraph", html`<div class="tools">
        <div class="line-of">
          <button class="bulleted" aria-label="Bullets">${iBullets}${chevron}</button>
          ${this.cell(iNumbers, "Numbering")}${this.drop("Numbering")}<i class="bar"></i>
          ${this.cell(iDedent, "Decrease indent")}${this.cell(iIndent, "Increase indent")}<i class="bar"></i>${this.cell(iSpacing, "Line spacing")}${this.drop("Line spacing")}
        </div>
        <div class="line-of">
          ${this.cell(iLeft, "Align left")}${this.cell(iCenter, "Center")}${this.cell(iRight, "Align right")}${this.cell(iJustify, "Justify")}<i class="bar"></i>${this.cell(iColumns, "Columns")}${this.drop("Columns")}
        </div></div>
        <div class="stack">${this.item(iTextDir, "Text Direction", { off: true, menu: true })}${this.item(iAlignText, "Align Text", { off: true, menu: true })}${this.item(iSmart, "Convert to SmartArt", { off: true, menu: true })}</div>`, "off")}
      ${this.group("drawing", "Drawing", html`
        <div class="gallery"><div class="shapes">${shapeBodies.map((b, i) => html`<button aria-label=${shapeNames[i]}><svg class="ico" width="18" height="18" viewBox="0 0 20 20" fill="none" stroke="#5c5c5c" stroke-width="1.200" aria-hidden="true">${b}</svg></button>`)}</div>
          <div class="scroller"><button class="off" aria-label="Scroll up" disabled>${tri(true)}</button><button aria-label="Scroll down">${tri(false)}</button><button aria-label="More shapes">${icon(8, 8, svg`<path d="M0 .5h8" stroke="#777"/><path d="M0 3h8L4 7z" fill="#777"/>`)}</button></div></div>
        <button class="big"><span class="art">${iArrange}</span><span class="line">Arrange</span><span class="line tip">${chevron}</span></button>
        <button class="big off" disabled><span class="art">${iQuick}</span><span class="line">Quick</span><span class="line">Styles ${chevron}</span></button>
        <div class="stack">${this.item(iFill, "Shape Fill", { off: true, menu: true })}${this.item(iOutline, "Shape Outline", { off: true, menu: true })}${this.item(iEffects, "Shape Effects", { off: true, menu: true })}</div>`, "off")}
      ${this.group("editing", "Editing", html`<div class="stack">${this.item(iFind, "Find")}${this.item(iReplace, "Replace", { menu: true, far: true })}${this.item(iSelect, "Select", { menu: true })}</div>`)}
      <button class="collapse" aria-label="Collapse the ribbon">${iCollapse}</button>
    </div>`;
  }

  render() {
    return html`<div class="app">
      <header class="head">${circuit}
        <div class="titlebar">
          <div class="quick"><button class="gap" aria-label="Save">${iSave}</button><button aria-label="Undo">${iUndo}</button><button class="narrow" aria-label="Undo options">${chevron}</button><button class="gap" aria-label="Redo">${iRedo}</button><button class="gap" aria-label="Start from beginning">${iShow}</button><button class="wide" aria-label="Customize toolbar">${iMore}</button></div>
          <div class="doc">Baadal  -  PowerPoint</div>
          <div class="window"><span class="user">praveen kumar</span><span class="avatar">PK</span><button aria-label="Ribbon display options">${iRibbonOpt}</button><button aria-label="Minimize">${iMin}</button><button aria-label="Restore">${iRestore}</button><button aria-label="Close">${iClose}</button></div>
        </div>
        <nav class="tabrow">${tabs.map((t) => html`<button class="tab ${t === "File" ? "file" : ""} ${t === this.tab ? "on" : ""}" @click=${() => (this.tab = t)}>${t}</button>`)}
          <button class="tell">${iBulb}<span>Tell me what you want to do</span></button><button class="share">${iShare}<span>Share</span></button></nav>
      </header>
      ${this.ribbon()}
      <main class="work">
        <aside class="side"><ol class="list">${thumbs.map((t) => html`<li class=${t.n === this.slide ? "on" : ""}><span class="num">${t.n}</span>
            <button class="thumb" aria-label=${t.title} @click=${() => (this.slide = t.n)}><svg class="ico" width="188" height="102" viewBox="0 0 188 102" fill="none" font-family="Inter, Open Sans, sans-serif"><rect width="188" height="102" fill="#d9d9d9"/>${arrowHeads}${t.art}<rect x="2.500" y="2.500" width="184" height="98" stroke="#222"/></svg></button></li>`)}</ol>
          <div class="scroll"><button aria-label="Scroll up">${tri(true)}</button><div class="a147"></div><div class="grip a427"></div><div class="a181"></div><button aria-label="Scroll down">${tri(false)}</button></div>
        </aside>
        <section class="editor">
          <div class="canvas"><article class="page"><div class="tint"><div class="frame">
            <h1>Abstract</h1>
            <ul class="points"><li>Build you form via the application.</li><li>Print the form filling the application</li><li>Scan the filled form to recognise for storing digitally</li></ul>
            <div class="flow">${["Build a form via application", "Built form should be printable", "Scan the form as an upload."].map((s, i) => html`${i ? icon(28, 10, svg`<path d="M0 5h21" stroke="#505046" stroke-width="1.300"/><path d="M20 1l8 4-8 4z" fill="#505046"/>`) : nothing}<div class="step">${s}</div>`)}</div>
          </div></div></article></div>
          <div class="rail"><div class="scroll"><button aria-label="Scroll up">${tri(true)}</button><div class="a137"></div><div class="grip a69"></div><div class="a480"></div><button aria-label="Scroll down">${tri(false)}</button></div>
            <button class="jump" aria-label="Previous slide">${icon(10, 10, svg`<path d="M0 5l5-5 5 5zM0 10l5-5 5 5z" fill="#6f6f6f"/>`)}</button><button class="jump last" aria-label="Next slide">${icon(10, 10, svg`<path d="M0 0l5 5 5-5zM0 5l5 5 5-5z" fill="#6f6f6f"/>`)}</button></div>
        </section>
      </main>
      <footer class="status"><span>Slide ${this.slide} of 10</span><button class="spell" aria-label="Spelling">${iSpell}</button><button class="access">${iAccess}<span>Accessibility: Investigate</span></button>
        <div class="right">${iBars}<label class="load" for="load">Downloading missing fonts...</label><progress id="load" value="0" max="100"></progress>
          <button class="notes">${iNotes}<span>Notes</span></button><button>${iComment}<span>Comments</span></button>
          <button class="view first on" aria-label="Normal">${iNormal}</button><button class="view" aria-label="Slide sorter">${iSorter}</button><button class="view" aria-label="Reading view">${iReading}</button><button class="view last" aria-label="Slide show">${iSlideShow}</button>
          <button class="pm" aria-label="Zoom out">${icon(10, 10, svg`<path d="M0 5h10" stroke="#444"/>`)}</button><span class="zoom"><input type="range" min="0" max="100" value="41" aria-label="Zoom" /><i class="mid"></i></span><button class="pm" aria-label="Zoom in">${icon(10, 10, svg`<path d="M0 5h10M5 0v10" stroke="#444"/>`)}</button>
          <span class="pct">85%</span><button class="fit" aria-label="Fit slide to window">${iFit}</button></div>
      </footer>
      <div class="task"><button class="widgets" aria-label="Widgets">${iWidgets}</button>
        <div class="apps">${apps.map((a) => html`<button class=${a.active ? "live" : ""} aria-label=${a.name}>${icon(30, 30, a.art)}${a.open ? html`<i class="pip"></i>` : nothing}</button>`)}</div>
        <div class="tray"><button class="up" aria-label="Show hidden icons">${iUp}</button><button aria-label="Network">${iGlobe}</button><button aria-label="Volume">${iSound}</button><button aria-label="Battery">${iBattery}</button><div class="clock">5:08 PM<br />8/15/2022</div><button class="moon" aria-label="Notifications">${iMoon}</button></div>
      </div>
    </div>`;
  }
}
